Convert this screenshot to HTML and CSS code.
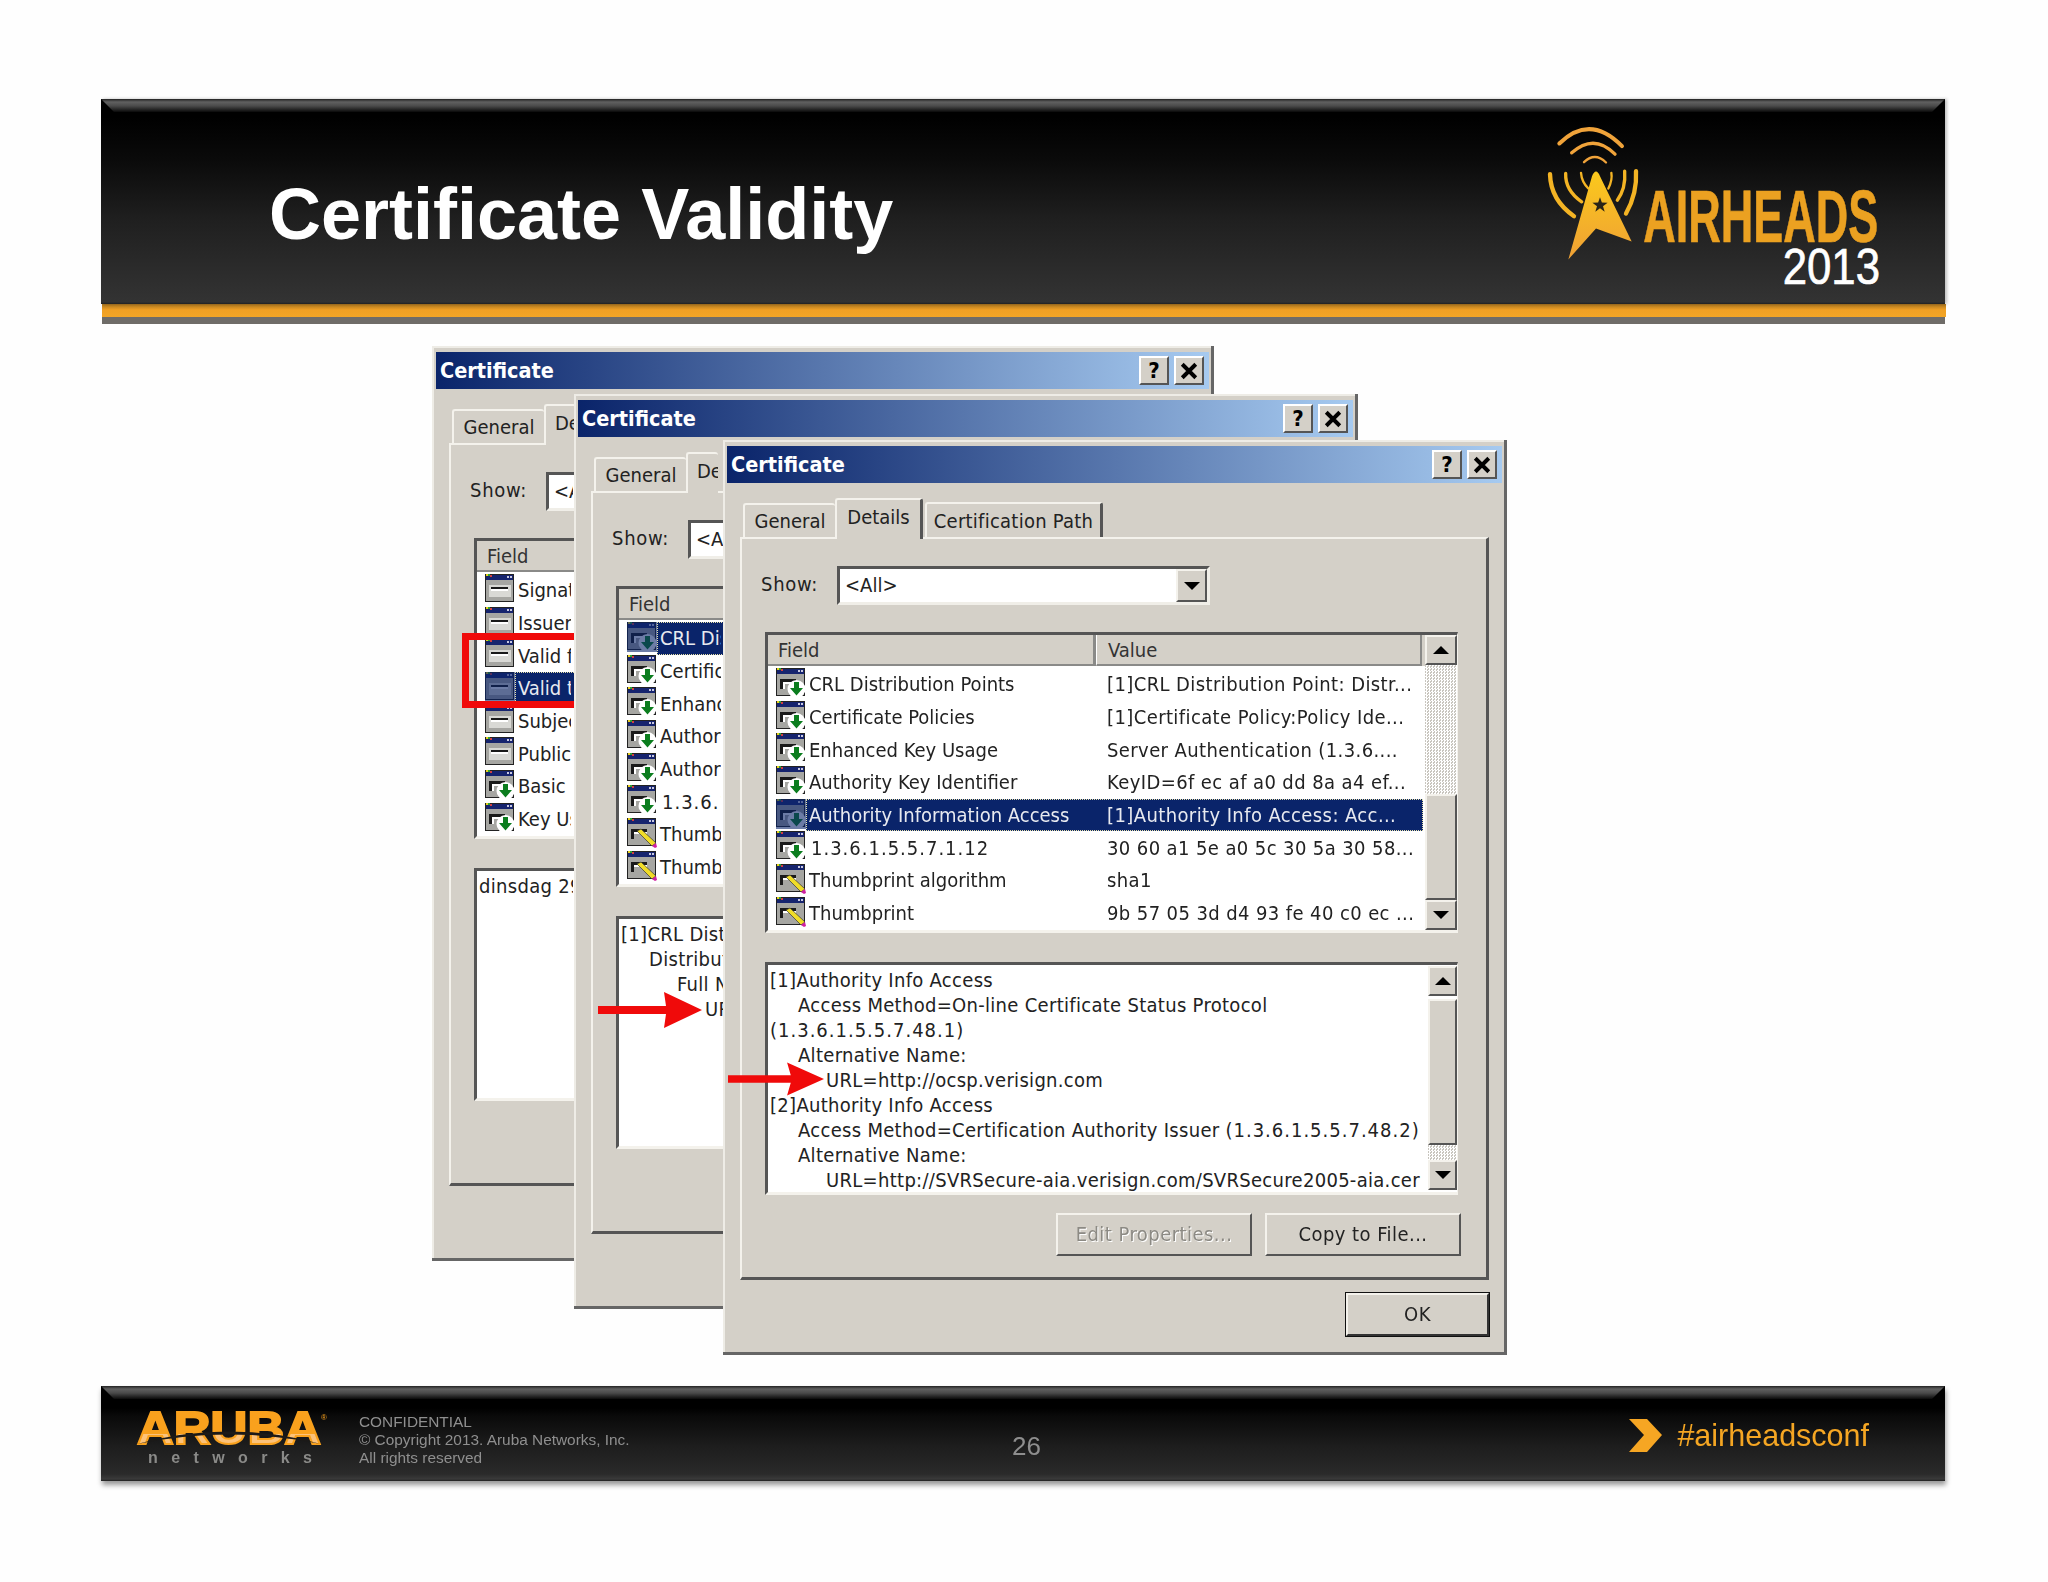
FILE: index.html
```html
<!DOCTYPE html>
<html lang="en">
<head>
<meta charset="utf-8">
<title>Certificate Validity</title>
<link rel="stylesheet" href="styles.css">
</head>
<body>
<svg class="defs" width="0" height="0" aria-hidden="true">
  <defs>
    <linearGradient id="arrowFill" x1="0" y1="0" x2="0" y2="1"><stop offset="0" stop-color="#fbc91c"/><stop offset="1" stop-color="#efa035"/></linearGradient>
    <linearGradient id="arubaFill" x1="0" y1="0" x2="0" y2="1"><stop offset="0" stop-color="#f9a11d"/><stop offset=".62" stop-color="#f9a11d"/><stop offset=".62" stop-color="#fcc27a"/><stop offset="1" stop-color="#fcc27a"/></linearGradient>
    <symbol id="ic-base" viewBox="0 0 30 30">
      <rect x="0" y="0" width="29" height="28" fill="#222"/>
      <rect x="1" y="1" width="27" height="5" fill="#16246e"/>
      <rect x="1" y="0" width="2" height="2" fill="#e8d020"/><rect x="3" y="0" width="2" height="2" fill="#30a030"/><rect x="5" y="1" width="2" height="2" fill="#d04040"/>
      <rect x="22" y="2" width="2" height="2" fill="#c8c8e0"/><rect x="25" y="2" width="2" height="2" fill="#c8c8e0"/>
      <rect x="1" y="6" width="27" height="21" fill="#a6a6a2"/>
    </symbol>
    <symbol id="ic-field" viewBox="0 0 30 30">
      <use href="#ic-base"/>
      <rect x="4" y="11" width="22" height="12" fill="#d9d9d5"/>
      <rect x="6" y="13" width="17" height="2" fill="#1a1a1a"/>
      <rect x="6" y="15" width="17" height="2" fill="#fff"/>
    </symbol>
    <symbol id="ic-ext" viewBox="0 0 30 30">
      <use href="#ic-base"/>
      <rect x="4" y="11" width="16" height="3" fill="#1a1a1a"/>
      <rect x="4" y="14" width="3" height="7" fill="#1a1a1a"/>
      <rect x="7" y="14" width="13" height="2" fill="#fff"/>
      <rect x="7" y="16" width="2" height="5" fill="#fff"/>
      <circle cx="20.500" cy="21" r="9" fill="#fff"/>
      <path d="M18 14h5v6h4l-6.500 7.500L14 20h4z" fill="#0b7d1e"/>
    </symbol>
    <symbol id="ic-pen" viewBox="0 0 30 30">
      <use href="#ic-base"/>
      <rect x="4" y="11" width="16" height="3" fill="#1a1a1a"/>
      <rect x="4" y="14" width="3" height="7" fill="#1a1a1a"/>
      <rect x="7" y="14" width="13" height="2" fill="#fff"/>
      <path d="M10 13l4-2 15 14-4 3z" fill="#f0dc28" stroke="#333" stroke-width=".7"/>
      <path d="M25 28l4-3 1 4-2 1z" fill="#d020a0"/>
    </symbol>
  </defs>
</svg>

<div class="slide">
  <header class="band">
    <h1 class="slide-title">Certificate Validity</h1>
    <svg class="airheads" viewBox="120 60 1080 530" width="360" height="177" role="img" aria-label="Airheads 2013">
      <g fill="none" stroke-linecap="round">
        <g stroke="#f0a33a">
          <path d="M178 130Q270 40 366 138" stroke-width="12"/>
          <path d="M215 158Q282 98 345 162" stroke-width="10"/>
          <path d="M252 186Q285 155 318 187" stroke-width="7"/>
        </g>
        <g stroke="#f4b424">
          <path d="M150 222Q152 300 222 348" stroke-width="13"/>
          <path d="M197 220Q195 270 245 305" stroke-width="10"/>
          <path d="M243 218Q245 245 265 265" stroke-width="7"/>
          <path d="M408 213Q412 280 378 340" stroke-width="13"/>
          <path d="M374 213Q378 265 352 300" stroke-width="10"/>
          <path d="M334 218Q338 240 325 265" stroke-width="7"/>
        </g>
      </g>
      <path d="M276 228Q288 200 300 228L395 424 288 385 205 478Z" fill="url(#arrowFill)"/>
      <polygon points="300,291 305.600,307.300 322.800,307.600 309,317.900 314.100,334.400 300,324.500 285.900,334.400 291,317.900 277.200,307.600 294.400,307.300" fill="#2a2418"/>
      <text class="logo-air" x="430" y="425" textLength="705" lengthAdjust="spacingAndGlyphs">AIRHEADS</text>
      <text class="logo-year" x="848" y="553" textLength="292" lengthAdjust="spacingAndGlyphs">2013</text>
    </svg>
  </header>
  <div class="rule-orange"></div>
  <div class="rule-gray"></div>

  <main class="stage">

    <section class="win back win-a">
      <div class="titlebar"><span class="title-text">Certificate</span><span class="cap-btns"><span class="cap-btn">?</span><span class="cap-btn"><svg viewBox="0 0 16 16" width="18" height="18"><path d="M2 2l12 12M14 2L2 14" stroke="#000" stroke-width="3.500"/></svg></span></span></div>
      <div class="tabs"><span class="tab tab-general">General</span><span class="tab tab-details">Details</span></div>
      <div class="panel">
        <div class="show-row"><span class="show-label">Show:</span><div class="combo"><span class="combo-text">&lt;All&gt;</span><span class="combo-btn"><i class="tri-down"></i></span></div></div>
        <div class="list">
          <div class="list-main">
            <div class="list-head"><span class="col-field">Field</span><span class="col-value"></span></div>
            <div class="row"><svg class="icon"><use href="#ic-field"/></svg><div class="cells"><span class="name">Signature algorithm</span></div></div>
            <div class="row"><svg class="icon"><use href="#ic-field"/></svg><div class="cells"><span class="name">Issuer</span></div></div>
            <div class="row"><svg class="icon"><use href="#ic-field"/></svg><div class="cells"><span class="name">Valid from</span></div></div>
            <div class="row sel"><svg class="icon"><use href="#ic-field"/></svg><div class="cells"><span class="name">Valid to</span></div></div>
            <div class="row"><svg class="icon"><use href="#ic-field"/></svg><div class="cells"><span class="name">Subject</span></div></div>
            <div class="row"><svg class="icon"><use href="#ic-field"/></svg><div class="cells"><span class="name">Public key</span></div></div>
            <div class="row"><svg class="icon"><use href="#ic-ext"/></svg><div class="cells"><span class="name">Basic Constraints</span></div></div>
            <div class="row"><svg class="icon"><use href="#ic-ext"/></svg><div class="cells"><span class="name">Key Usage</span></div></div>
          </div>
        </div>
        <div class="detail"><div class="detail-text"><div>dinsdag 29 oktober 2013</div></div></div>
      </div>
      <div class="red-box"></div>
    </section>

    <section class="win back win-b">
      <div class="titlebar"><span class="title-text">Certificate</span><span class="cap-btns"><span class="cap-btn">?</span><span class="cap-btn"><svg viewBox="0 0 16 16" width="18" height="18"><path d="M2 2l12 12M14 2L2 14" stroke="#000" stroke-width="3.500"/></svg></span></span></div>
      <div class="tabs"><span class="tab tab-general">General</span><span class="tab tab-details">Details</span></div>
      <div class="panel">
        <div class="show-row"><span class="show-label">Show:</span><div class="combo"><span class="combo-text">&lt;All&gt;</span><span class="combo-btn"><i class="tri-down"></i></span></div></div>
        <div class="list">
          <div class="list-main">
            <div class="list-head"><span class="col-field">Field</span><span class="col-value"></span></div>
            <div class="row sel"><svg class="icon"><use href="#ic-ext"/></svg><div class="cells"><span class="name">CRL Distribution Points</span></div></div>
            <div class="row"><svg class="icon"><use href="#ic-ext"/></svg><div class="cells"><span class="name">Certificate Policies</span></div></div>
            <div class="row"><svg class="icon"><use href="#ic-ext"/></svg><div class="cells"><span class="name">Enhanced Key Usage</span></div></div>
            <div class="row"><svg class="icon"><use href="#ic-ext"/></svg><div class="cells"><span class="name">Authority Key Identifier</span></div></div>
            <div class="row"><svg class="icon"><use href="#ic-ext"/></svg><div class="cells"><span class="name">Authority Information Access</span></div></div>
            <div class="row"><svg class="icon"><use href="#ic-ext"/></svg><div class="cells"><span class="name num">1.3.6.1.5.5.7.1.12</span></div></div>
            <div class="row"><svg class="icon"><use href="#ic-pen"/></svg><div class="cells"><span class="name">Thumbprint algorithm</span></div></div>
            <div class="row"><svg class="icon"><use href="#ic-pen"/></svg><div class="cells"><span class="name">Thumbprint</span></div></div>
          </div>
        </div>
        <div class="detail"><div class="detail-text">
          <div>[1]CRL Distribution Point</div>
          <div class="i1">Distribution Point Name:</div>
          <div class="i2">Full Name:</div>
          <div class="i3">URL=http://SVRSecure-crl.verisign.com/SVRSecure2005.crl</div>
        </div></div>
      </div>
      <svg class="red-arrow arrow-b" viewBox="0 0 104 36" width="104" height="36"><path d="M0 14h68L66 0l38 18-38 18 2-14H0z" fill="#f00a0a"/></svg>
    </section>

    <section class="win win-c">
      <div class="titlebar"><span class="title-text">Certificate</span><span class="cap-btns"><span class="cap-btn">?</span><span class="cap-btn"><svg viewBox="0 0 16 16" width="18" height="18"><path d="M2 2l12 12M14 2L2 14" stroke="#000" stroke-width="3.500"/></svg></span></span></div>
      <div class="tabs"><span class="tab tab-general">General</span><span class="tab tab-details">Details</span><span class="tab tab-path">Certification Path</span></div>
      <div class="panel">
        <div class="show-row"><span class="show-label">Show:</span><div class="combo"><span class="combo-text">&lt;All&gt;</span><span class="combo-btn"><i class="tri-down"></i></span></div></div>
        <div class="list">
          <div class="list-main">
            <div class="list-head"><span class="col-field">Field</span><span class="col-value">Value</span></div>
            <div class="row"><svg class="icon"><use href="#ic-ext"/></svg><div class="cells"><span class="name">CRL Distribution Points</span><span class="val">[1]CRL Distribution Point: Distr...</span></div></div>
            <div class="row"><svg class="icon"><use href="#ic-ext"/></svg><div class="cells"><span class="name">Certificate Policies</span><span class="val">[1]Certificate Policy:Policy Ide...</span></div></div>
            <div class="row"><svg class="icon"><use href="#ic-ext"/></svg><div class="cells"><span class="name">Enhanced Key Usage</span><span class="val">Server Authentication (1.3.6....</span></div></div>
            <div class="row"><svg class="icon"><use href="#ic-ext"/></svg><div class="cells"><span class="name">Authority Key Identifier</span><span class="val">KeyID=6f ec af a0 dd 8a a4 ef...</span></div></div>
            <div class="row sel"><svg class="icon"><use href="#ic-ext"/></svg><div class="cells"><span class="name">Authority Information Access</span><span class="val">[1]Authority Info Access: Acc...</span></div></div>
            <div class="row"><svg class="icon"><use href="#ic-ext"/></svg><div class="cells"><span class="name num">1.3.6.1.5.5.7.1.12</span><span class="val">30 60 a1 5e a0 5c 30 5a 30 58...</span></div></div>
            <div class="row"><svg class="icon"><use href="#ic-pen"/></svg><div class="cells"><span class="name">Thumbprint algorithm</span><span class="val">sha1</span></div></div>
            <div class="row"><svg class="icon"><use href="#ic-pen"/></svg><div class="cells"><span class="name">Thumbprint</span><span class="val">9b 57 05 3d d4 93 fe 40 c0 ec ...</span></div></div>
          </div>
          <div class="sbar sbar-list">
            <span class="sb-btn"><i class="tri-up"></i></span>
            <span class="sb-track sb-grow"></span>
            <span class="sb-thumb sb-thumb-list"></span>
            <span class="sb-btn"><i class="tri-down"></i></span>
          </div>
        </div>
        <div class="detail">
          <div class="detail-text">
            <div>[1]Authority Info Access</div>
            <div class="i1">Access Method=On-line Certificate Status Protocol</div>
            <div class="num">(1.3.6.1.5.5.7.48.1)</div>
            <div class="i1">Alternative Name:</div>
            <div class="i2">URL=http://ocsp.verisign.com</div>
            <div>[2]Authority Info Access</div>
            <div class="i1">Access Method=Certification Authority Issuer <span class="num">(1.3.6.1.5.5.7.48.2)</span></div>
            <div class="i1">Alternative Name:</div>
            <div class="i2">URL=http://SVRSecure-aia.verisign.com/SVRSecure2005-aia.cer</div>
          </div>
          <div class="sbar sbar-detail">
            <span class="sb-btn"><i class="tri-up"></i></span>
            <span class="sb-thumb sb-thumb-detail"></span>
            <span class="sb-track sb-grow"></span>
            <span class="sb-btn"><i class="tri-down"></i></span>
          </div>
        </div>
        <div class="actions"><span class="btn btn-disabled">Edit Properties...</span><span class="btn">Copy to File...</span></div>
      </div>
      <div class="win-foot"><span class="btn btn-default">OK</span></div>
      <svg class="red-arrow arrow-c" viewBox="0 0 104 36" width="96" height="36"><path d="M0 14h68L64 0l40 18-40 18 4-14H0z" fill="#f00a0a"/></svg>
    </section>
  </main>

  <footer class="foot">
    <svg class="aruba" viewBox="0 0 196 60" width="196" height="60" role="img" aria-label="Aruba networks">
      <text class="aruba-word" x="0" y="33" textLength="184" lengthAdjust="spacingAndGlyphs">ARUBA</text>
      <path d="M0 33Q92 8 184 33Q92 14 0 33Z" fill="#1c1a18"/>
      <text class="aruba-reg" x="184" y="9">®</text>
      <text class="aruba-sub" x="11" y="52" textLength="164">networks</text>
    </svg>
    <div class="meta"><div>CONFIDENTIAL</div><div>© Copyright 2013. Aruba Networks, Inc.</div><div>All rights reserved</div></div>
    <div class="page-no">26</div>
    <div class="tag">
      <svg viewBox="0 0 33 33" width="33" height="33"><path d="M0 0h18l15 16-15 17H0l15-17z" fill="#f6a623"/></svg>
      <span>#airheadsconf</span>
    </div>
  </footer>
</div>
</body>
</html>
```

FILE: styles.css
```css
* { box-sizing: border-box; }
html, body { margin: 0; padding: 0; background: #fefefe; }
.defs { position: absolute; }
.slide { width: 2048px; height: 1582px; padding-top: 99px; overflow: hidden; display: flex; flex-direction: column; font-family: "Liberation Sans", Arial, sans-serif; }

/* header band */
.band {
  position: relative; width: 1844px; height: 205px; margin-left: 101px; flex: none;
  display: flex; justify-content: space-between; align-items: flex-start; padding: 0 45px 0 168px;
  background: linear-gradient(#000 0, #000 18px, #0a0a0a 60px, #1f1f1f 120px, #303030 190px, #333 203px, #222 205px);
  box-shadow: 2px 0 3px rgba(0,0,0,.25);
}
.band::before, .foot::before {
  content: ""; position: absolute; left: 0; right: 0; top: 0; height: 13px;
  background: linear-gradient(#222 0, #606060 3px, #4a4a4a 7px, #0a0a0a 13px);
  clip-path: polygon(0 0, 100% 0, calc(100% - 13px) 100%, 13px 100%);
}
.slide-title { position: relative; margin: 75px 0 0; font-size: 72px; line-height: 80px; font-weight: 700; color: #fff; white-space: nowrap; }
.airheads { position: relative; margin-top: 21px; flex: none; overflow: visible; }
.logo-air { font: 700 223px "Liberation Sans", sans-serif; fill: #eba121; stroke: #eba121; stroke-width: 2px; }
.logo-year { font: 400 150px "Liberation Sans", sans-serif; fill: #fff; stroke: #fff; stroke-width: 2px; }
.rule-orange { width: 1844px; height: 13px; margin-left: 102px; flex: none; background: linear-gradient(#a87420, #f0a024 45%, #f2a526); }
.rule-gray { width: 1843px; height: 7px; margin-left: 102px; flex: none; background: #6f6c68; }

/* stage holding the three overlapping windows */
.stage { position: relative; height: 1062px; flex: none; filter: blur(.55px); }
.win {
  position: absolute; z-index: 1; width: 784px; height: 915px; padding: 6px 5px 0 4px; background: #d4d0c8; color: #222;
  font-family: "DejaVu Sans Condensed", "DejaVu Sans", sans-serif; font-size: 20px;
  box-shadow: inset -3px -3px 0 #666, inset 2px 2px 0 #eeece6;
}
.win-a { left: 432px; top: 22px; width: 782px; }
.win-b { left: 574px; top: 70px; }
.win-c { left: 723px; top: 116px; }

.titlebar { height: 37px; display: flex; align-items: center; justify-content: space-between; padding: 0 5px 0 4px; background: linear-gradient(90deg, #0a246a, #a6caf0); }
.title-text { font-weight: 700; font-size: 21.500px; color: #fff; }
.cap-btns { display: flex; gap: 5px; }
.cap-btn { width: 30px; height: 29px; display: flex; align-items: center; justify-content: center; background: #d4d0c8; border: 2px solid; border-color: #fff #555 #555 #fff; font-weight: 700; font-size: 22px; color: #000; }

.tabs { height: 54px; margin-left: 16px; display: flex; align-items: flex-end; }
.tab { display: flex; align-items: center; justify-content: center; position: relative; background: #d4d0c8; border: 2px solid #f4f2ec; border-bottom: 0; border-right: 0; border-radius: 3px 3px 0 0; }
.tab-general { width: 92px; height: 34px; }
.tab-details { width: 88px; height: 41px; margin-bottom: -2px; z-index: 1; border-right: 3px solid #555; padding-bottom: 6px; }
.tab-path { width: 178px; height: 35px; margin-left: 2px; border-right: 3px solid #555; letter-spacing: .25px; }

.panel { width: 749px; height: 743px; margin-left: 13px; padding: 27px 0 0 23px; border: solid; border-width: 2px 3px 3px 2px; border-color: #f4f2ec #555 #555 #f4f2ec; }
.show-row { display: flex; align-items: center; margin-left: -4px; }
.show-label { width: 76px; flex: none; letter-spacing: .7px; padding-bottom: 3px; }
.combo { width: 373px; height: 39px; display: flex; justify-content: space-between; background: #fff; border: solid; border-width: 3px 3px 3px 3px; border-color: #555 #f0eee8 #f0eee8 #555; }
.combo-text { padding-left: 5px; line-height: 33px; }
.combo-btn { width: 31px; display: flex; align-items: center; justify-content: center; background: #d4d0c8; border: 2px solid; border-color: #f4f2ec #555 #555 #f4f2ec; }
.tri-down { width: 0; height: 0; border: 8px solid transparent; border-top: 8px solid #000; border-bottom: 0; }
.tri-up { width: 0; height: 0; border: 8px solid transparent; border-bottom: 8px solid #000; border-top: 0; }

.list { width: 693px; height: 301px; margin-top: 27px; display: flex; background: #fff; border: solid; border-width: 3px 1px 3px 3px; border-color: #555 #f4f2ec #f4f2ec #555; }
.list-main { width: 657px; flex: none; overflow: hidden; }
.list-head { display: flex; height: 31px; margin-bottom: 2px; background: #d4d0c8; color: #333; line-height: 31px; }
.col-field { width: 328px; padding-left: 10px; border-right: 3px solid #8a8a88; border-bottom: 2px solid #8a8a88; }
.col-value { flex: 1; padding-left: 11px; border-bottom: 2px solid #8a8a88; border-left: 1px solid #fff; margin-right: 3px; border-right: 2px solid #8a8a88; }
.row { position: relative; display: flex; height: 32.700px; padding-left: 8px; padding-right: 2px; }
.icon { width: 30px; height: 30px; flex: none; }
.cells { flex: 1; display: flex; align-items: center; min-width: 0; line-height: 30px; }
.name { width: 301px; flex: none; padding-left: 3px; white-space: nowrap; overflow: hidden; }
.val { white-space: nowrap; overflow: hidden; letter-spacing: .4px; }
.num { letter-spacing: 1px; }
.name.num { padding-left: 5px; }
.row.sel .cells { background: #0a246a; color: #e8eaf0; outline: 1px dotted #e6e0a8; outline-offset: -1px; }
.row.sel::before { content: ""; position: absolute; left: 8px; top: 0; width: 30px; height: 30px; background: rgba(10, 36, 106, .6); }

/* back windows: only the part that shows past the window in front carries text */
.back .tab-details { width: 32px; border-right: 0; justify-content: flex-start; padding-left: 9px; overflow: hidden; white-space: nowrap; }
.back .combo-text { overflow: hidden; white-space: nowrap; }
.win-a .combo-text { width: 24px; }
.win-b .combo-text { width: 32px; }
.win-a .name { width: 56px; }
.win-b .name { width: 64px; }
.back .detail-text { flex: none; }
.win-a .detail-text { width: 96px; }
.win-b .detail-text { width: 104px; }

.sbar { display: flex; flex-direction: column; flex: none; }
.sbar-list { width: 32px; }
.sbar-detail { width: 29px; margin: 1px 0 0 auto; height: 224px; }
.sb-btn { height: 30px; flex: none; display: flex; align-items: center; justify-content: center; background: #d4d0c8; border: 2px solid; border-color: #f4f2ec #555 #555 #f4f2ec; }
.sb-thumb { flex: none; background: #d4d0c8; border: 2px solid; border-color: #f4f2ec #555 #555 #f4f2ec; }
.sb-thumb-list { height: 106px; }
.sb-thumb-detail { height: 146px; margin-top: 3px; }
.sb-track { background: conic-gradient(#fff 25%, #c8c5be 0 50%, #fff 0 75%, #c8c5be 0) 0 0 / 3px 3px; }
.sb-grow { flex: 1; }

.detail { position: relative; width: 693px; height: 233px; margin-top: 29px; display: flex; background: #fff; overflow: hidden; border: solid; border-width: 3px 1px 3px 3px; border-color: #555 #f4f2ec #f4f2ec #555; }
.detail-text { flex: 1; min-width: 0; padding: 3px 0 0 2px; line-height: 25px; letter-spacing: .3px; white-space: nowrap; overflow: hidden; }
.i1 { padding-left: 28px; }
.i2 { padding-left: 56px; }
.i3 { padding-left: 84px; }

.actions { width: 696px; margin-top: 18px; display: flex; justify-content: flex-end; gap: 13px; }
.btn { display: flex; align-items: center; justify-content: center; width: 196px; height: 43px; padding-bottom: 2px; letter-spacing: .45px; background: #d4d0c8; border: 2px solid; border-color: #f4f2ec #555 #555 #f4f2ec; }
.btn-disabled { color: #8c8a84; text-shadow: 1px 1px 0 #fff; }
.win-foot { display: flex; justify-content: flex-end; margin: 13px 13px 0 0; }
.btn-default { width: 143px; box-shadow: 0 0 0 1px #111; border-color: #f4f2ec #333 #333 #f4f2ec; }

.red-box { position: absolute; left: 30px; top: 287px; width: 150px; height: 75px; border: 7px solid #f00a0a; }
.red-arrow { position: absolute; }
.arrow-b { left: 24px; top: 598px; }
.arrow-c { left: 5px; top: 621px; }

/* footer band */
.foot {
  position: relative; width: 1844px; height: 95px; margin-left: 101px; flex: none;
  display: flex; align-items: flex-start; padding: 25px 76px 0 36px;
  background: linear-gradient(#000 0, #000 22px, #0a0a0a 30px, #1d1d1d 60px, #2a2a2a 88px, #3a3a3a 93px, #222 95px);
  box-shadow: 1px 4px 5px rgba(0,0,0,.4);
}
.aruba { position: relative; flex: none; margin-right: 26px; overflow: visible; }
.aruba-word { font: 700 46px "Liberation Sans", sans-serif; fill: url(#arubaFill); stroke: #f9a11d; stroke-width: 2px; }
.aruba-reg { font: 400 8px "Liberation Sans", sans-serif; fill: #f9a11d; }
.aruba-sub { font: 700 16px "Liberation Sans", sans-serif; fill: #8a8a88; }
.meta { position: relative; width: 653px; flex: none; margin-top: 2px; color: #8f8f8f; font-size: 15.400px; line-height: 18px; }
.page-no { position: relative; margin-top: 20px; color: #8e8e8e; font-size: 26px; line-height: 30px; }
.tag { position: relative; margin-left: auto; margin-top: 6px; display: flex; align-items: center; gap: 15px; color: #f5a623; font-size: 30.500px; line-height: 36px; }
```
